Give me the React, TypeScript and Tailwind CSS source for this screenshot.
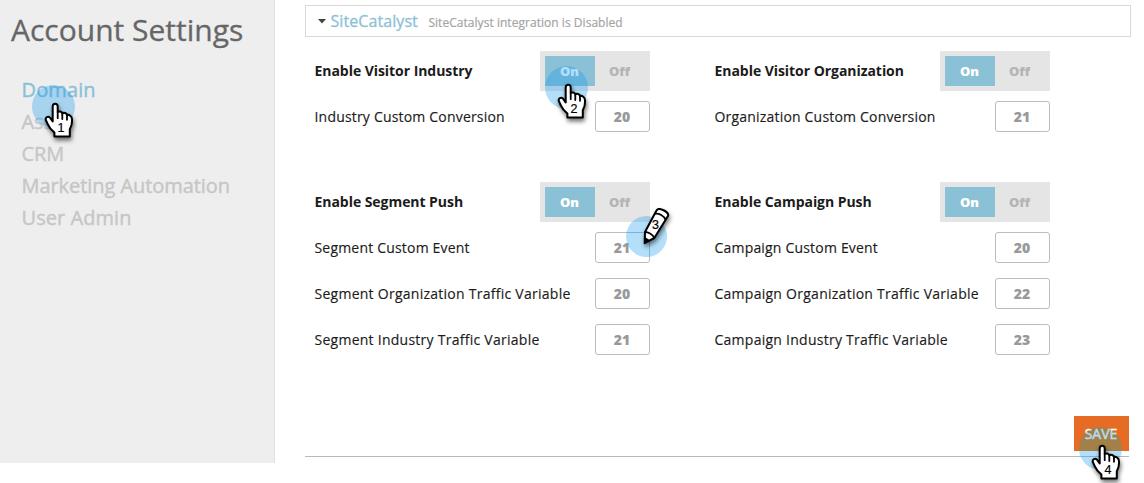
import React from 'react';

type Field = { label: string; value: string };
type Group = { title: string; fields: Field[] };

const topGroups: Group[] = [
  { title: 'Enable Visitor Industry', fields: [{ label: 'Industry Custom Conversion', value: '20' }] },
  { title: 'Enable Visitor Organization', fields: [{ label: 'Organization Custom Conversion', value: '21' }] },
];

const bottomGroups: Group[] = [
  {
    title: 'Enable Segment Push',
    fields: [
      { label: 'Segment Custom Event', value: '21' },
      { label: 'Segment Organization Traffic Variable', value: '20' },
      { label: 'Segment Industry Traffic Variable', value: '21' },
    ],
  },
  {
    title: 'Enable Campaign Push',
    fields: [
      { label: 'Campaign Custom Event', value: '20' },
      { label: 'Campaign Organization Traffic Variable', value: '22' },
      { label: 'Campaign Industry Traffic Variable', value: '23' },
    ],
  },
];

function Toggle() {
  return (
    <div className="flex h-10 w-[110px] bg-[#e5e5e5] p-[5px] text-[13px] font-extrabold leading-[31px]">
      <button className="w-[50px] bg-[#8bc1d6] pr-px text-center text-white">On</button>
      <button className="w-[50px] pr-px text-center text-[#b5b5b5]">Off</button>
    </div>
  );
}

function SettingGroup({ title, fields }: Group) {
  return (
    <section className="w-[335.5px]">
      <div className="flex items-center justify-between">
        <h3 className="whitespace-nowrap pb-[2px] text-[14px] font-bold tracking-[-0.05px] text-[#1b1b1b]">{title}</h3>
        <Toggle />
      </div>
      <div className="mt-[10px] flex flex-col gap-[15px]">
        {fields.map((f) => (
          <div key={f.label} className="flex h-[31px] items-center justify-between">
            <span className={`whitespace-nowrap text-[14px] text-[#1b1b1b] [-webkit-text-stroke:0.15px] ${f.label.includes('Traffic') ? 'tracking-[0.26px]' : 'tracking-[0.19px]'}`}>{f.label}</span>
            <span className="flex h-[31px] w-[55px] items-center justify-center rounded-[3px] border border-[#b9bcc3] bg-white pr-px text-[14px] font-extrabold text-[#999]">
              {f.value}
            </span>
          </div>
        ))}
      </div>
    </section>
  );
}

function Hand({ n, className }: { n: string; className: string }) {
  return (
    <div className={`pointer-events-none absolute h-[64px] w-[60px] ${className}`}>
      <svg width="60" height="64" viewBox="0 0 60 64" className="overflow-visible drop-shadow-[1px_3px_2px_rgba(0,0,0,0.55)]">
        <path
          d="M20.7 36.5V21.4C20.7 17.9 25.7 17.9 25.7 21.4V27.1C26.8 25.9 30 26.2 30.3 28.4C31.7 27.3 34.7 27.8 35 30C37 29.4 40 31.2 40 34.2C40.3 38.2 39.5 41.3 37.8 44.3V51.5H22.4V47.6C19.6 45.3 17.1 42.4 16 39.7L13.9 35.3C12.8 32.2 16.2 30.7 18 32.7Z"
          fill="white" stroke="black" strokeWidth="2" strokeLinejoin="round"
        />
        <path d="M25.7 27V33.2M30.3 28.5V34M35 30V34.8" stroke="black" strokeWidth="1.8" strokeLinecap="round" />
      </svg>
      <span className="absolute left-[23px] top-[35px] w-[12px] text-center font-['Liberation_Sans',sans-serif] text-[12.5px] leading-[16px] text-black [-webkit-text-stroke:0.2px]">{n}</span>
    </div>
  );
}

function Halo({ className }: { className: string }) {
  return <div className={`pointer-events-none absolute rounded-full bg-[#0894ee]/30 ${className}`} />;
}

export default function App() {
  return (
    <div className="relative flex h-[483px] w-[1144px] overflow-hidden bg-white font-['Open_Sans',sans-serif]">
      <aside className="h-[463px] w-[275px] border-r border-[#e1e1e1] bg-[#eee] pl-[11px] pt-[10px]">
        <h1 className="whitespace-nowrap text-[30px] leading-[40px] text-[#666] [-webkit-text-stroke:0.3px]">Account Settings</h1>
        <nav className="ml-[10.5px] mt-[24px] flex flex-col whitespace-nowrap text-[20px] leading-[32px] tracking-[-0.06px] text-[#c6c6c6] [-webkit-text-stroke:0.4px]">
          <a className="tracking-[0.12px] text-[#8bc1d6]">Domain</a>
          <a>Ass</a>
          <a>CRM</a>
          <a>Marketing Automation</a>
          <a className="tracking-[0.06px]">User Admin</a>
        </nav>
      </aside>

      <main className="flex h-[457px] flex-col pl-[30px] pt-[5px]">
        <header className="flex h-8 w-[826px] items-center border border-[#d9d9d9] pl-[11.5px]">
          <svg width="8" height="5" viewBox="0 0 8 5"><path d="M0 0H8L4 4.5Z" fill="#444" /></svg>
          <h2 className="ml-[5px] text-[16px] tracking-[0.08px] text-[#8bc1d6] [-webkit-text-stroke:0.3px]">SiteCatalyst</h2>
          <span className="ml-[10.5px] mt-[3px] text-[12px] tracking-[0.04px] text-[#a5a5a5] [-webkit-text-stroke:0.2px]">SiteCatalyst integration is Disabled</span>
        </header>
        <div className="flex h-[420px] w-[824px] flex-col border-b border-[#b3bac5] pt-[14px]">
          <div className="flex h-[131px] gap-[64.5px] pl-[9.5px]">
            {topGroups.map((g) => <SettingGroup key={g.title} {...g} />)}
          </div>
          <div className="flex gap-[64.5px] pl-[9.5px]">
            {bottomGroups.map((g) => <SettingGroup key={g.title} {...g} />)}
          </div>
          <button className="mb-[5px] ml-auto mt-auto h-[35px] w-[55px] bg-[#e66c25] bg-[radial-gradient(circle_at_26.5px_32.5px,#e57701_21px,#e66c25_21.5px)] pr-px text-[14px] text-white [-webkit-text-stroke:0.4px]">SAVE</button>
        </div>
      </main>

      <Halo className="left-[32px] top-[85px] h-[43px] w-[43px]" />
      <Hand n="1" className="left-[32px] top-[84.5px]" />
      <Halo className="left-[545px] top-[66px] h-[43px] w-[43px]" />
      <Hand n="2" className="left-[545px] top-[66px]" />
      <Halo className="left-[626px] top-[216px] h-[41px] w-[41px]" />
      <div className="pointer-events-none absolute left-[636px] top-[200px] h-[50px] w-[40px]">
        <svg width="40" height="50" viewBox="0 0 40 50" className="overflow-visible drop-shadow-[1px_3px_2px_rgba(0,0,0,0.5)]">
          <path d="M8.7 43.2L9 32L20.5 10.5C22.5 6.5 33.5 12 32 16L18.3 38Z" fill="white" stroke="black" strokeWidth="2" strokeLinejoin="round" />
          <path d="M8.7 43.2L8.8 37L14 40.2Z" fill="black" />
          <path d="M9 32C12 32 16.5 34 18.3 38M18.8 13.8C23 13 28 15.8 29.5 19.7" fill="none" stroke="black" strokeWidth="1.8" />
        </svg>
        <span className="absolute left-[13.5px] top-[17px] w-[12px] text-center font-['Liberation_Sans',sans-serif] text-[12.5px] leading-[16px] text-black [-webkit-text-stroke:0.2px]">3</span>
      </div>
      <Halo className="left-[1079px] top-[427px] h-[43px] w-[43px]" />
      <Hand n="4" className="left-[1079px] top-[426.5px]" />
    </div>
  );
}
